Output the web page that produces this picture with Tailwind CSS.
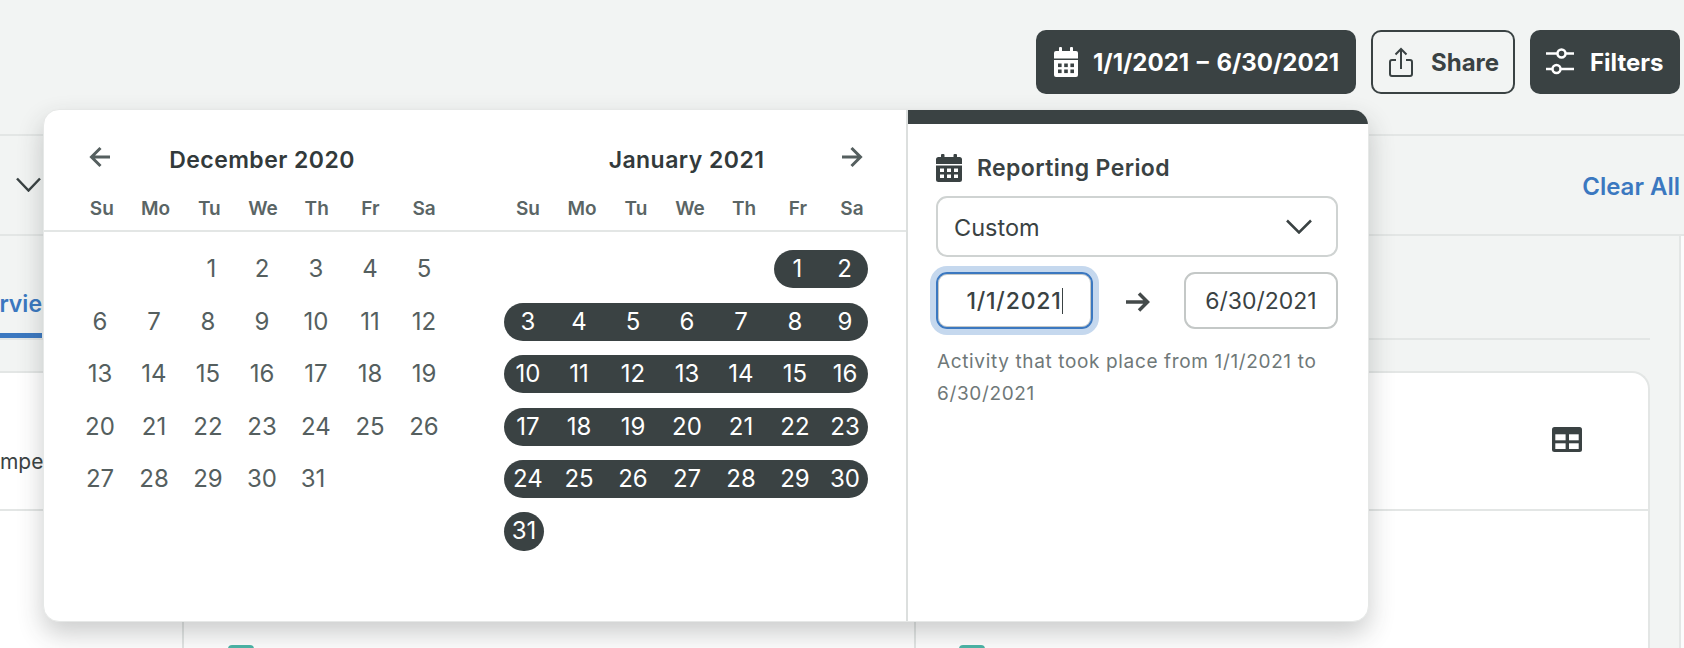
<!DOCTYPE html>
<html lang="en">
<head>
    <meta charset="UTF-8">
    <title>Reporting Period</title>
    <script src="https://cdn.jsdelivr.net/npm/@tailwindcss/browser@4"></script>
</head>
<body class="relative h-[648px] overflow-hidden bg-[#f2f4f3] font-['Inter',sans-serif] text-[#3a4243]">

    <!-- page header -->
    <header class="flex h-[136px] items-start justify-end gap-[15px] border-b-2 border-[#e3e6e5] pt-[30px] pr-[4px]">
        <button class="flex h-[64px] w-[320px] items-center gap-[15px] rounded-[10px] bg-[#3a4243] pl-[18px] text-[24px] font-[650] text-white">
            <svg class="w-[24px] h-[30px]" viewBox="0 0 24 30">
                <rect x="5" y="0" width="3" height="7" rx="1" fill="#fff"/>
                <rect x="16" y="0" width="3" height="7" rx="1" fill="#fff"/>
                <path d="M2 4H22a2 2 0 0 1 2 2V11.500H0V6a2 2 0 0 1 2-2z" fill="#fff"/>
                <path d="M0 13H24V28a2 2 0 0 1-2 2H2a2 2 0 0 1-2-2z" fill="#fff"/>
                <g fill="#3a4243">
                    <rect x="4" y="16.500" width="3.600" height="3.600"/><rect x="10.200" y="16.500" width="3.600" height="3.600"/><rect x="16.400" y="16.500" width="3.600" height="3.600"/>
                    <rect x="4" y="22.500" width="3.600" height="3.600"/><rect x="10.200" y="22.500" width="3.600" height="3.600"/><rect x="16.400" y="22.500" width="3.600" height="3.600"/>
                </g>
            </svg>
            <span class="pt-[1px] [word-spacing:2px]">1/1/2021 – 6/30/2021</span>
        </button>
        <button class="flex h-[64px] w-[144px] items-center gap-[18px] rounded-[10px] border-2 border-[#3a4243] pl-[16px] text-[24px] font-[650]">
            <svg class="w-[24px] h-[30px]" viewBox="0 0 24 30" fill="none" stroke="#3a4243" stroke-width="2">
                <path d="M7 13H3a2 2 0 0 0-2 2V27a2 2 0 0 0 2 2H21a2 2 0 0 0 2-2V15a2 2 0 0 0-2-2H17"/>
                <path d="M12 2V22M6.500 7.500L12 2l5.500 5.500"/>
            </svg>
            <span class="pt-[1px]">Share</span>
        </button>
        <button class="flex h-[64px] w-[150px] items-center gap-[16px] rounded-[10px] bg-[#3a4243] pl-[16px] text-[24px] font-[650] text-white">
            <svg class="w-[28px] h-[30px]" viewBox="0 0 28 30" fill="none" stroke="#fff" stroke-width="2.500">
                <path d="M0 6.500H11.500M19.500 6.500H28"/>
                <circle cx="15.500" cy="6.500" r="4"/>
                <path d="M0 22H6.500M14.500 22H28"/>
                <circle cx="10.500" cy="22" r="4"/>
            </svg>
            <span class="pt-[1px]">Filters</span>
        </button>
    </header>

    <!-- filter row -->
    <div class="flex h-[100px] items-center justify-between border-b-2 border-[#e3e6e5] pr-[4px] pl-[16px]">
        <svg class="w-[25px] h-[15px] -mt-[2px]" viewBox="0 0 25 15" fill="none" stroke="#3a4243" stroke-width="2.500"><path d="M1 1.500L12.500 13.500L24 1.500"/></svg>
        <a class="pt-[3px] text-[24px] font-semibold text-[#3b78c0]">Clear All</a>
    </div>

    <div class="flex">
        <div class="min-w-0 flex-1">
            <!-- tabs -->
            <div class="flex h-[104px] items-end border-b-2 border-[#e3e6e5] mr-[29px]">
                <div class="-ml-[60px] h-[104px] w-[102px] overflow-hidden whitespace-nowrap border-b-[5px] border-[#3b78c0] pt-[53px] text-right text-[23px] font-semibold text-[#3b78c0]">Overvie</div>
            </div>

            <!-- report card behind the popup -->
            <section class="mt-[31px] mr-[29px] -ml-[20px] rounded-tr-[18px] border-2 border-b-0 border-[#e3e6e5] bg-white">
                <div class="flex h-[138px] items-center justify-between border-b-2 border-[#e3e6e5] pr-[66px] pl-[20px]">
                    <span class="-ml-[30px] mt-[42px] whitespace-nowrap text-[21px]">Competitors</span>
                    <svg class="w-[30px] h-[25px] -mt-[3px]" viewBox="0 0 30 25">
                        <rect width="30" height="25" rx="2.500" fill="#3a4243"/>
                        <g fill="#fff">
                            <rect x="3.300" y="7.300" width="10.300" height="6"/><rect x="17" y="7.300" width="9.700" height="6"/>
                            <rect x="3.300" y="16.300" width="10.300" height="5.700"/><rect x="17" y="16.300" width="9.700" height="5.700"/>
                        </g>
                    </svg>
                </div>
                <div class="flex h-[137px]">
                    <div class="w-[202px] border-r-2 border-[#e3e6e5]"></div>
                    <div class="w-[732px] border-r-2 border-[#e3e6e5] pt-[134px] pl-[44px]"><div class="h-[4px] w-[26px] rounded-t-[5px] bg-[#4db6a8]"></div></div>
                    <div class="pt-[134px] pl-[43px]"><div class="h-[4px] w-[26px] rounded-t-[5px] bg-[#4db6a8]"></div></div>
                </div>
            </section>
        </div>
        <!-- sidebar edge -->
        <div class="h-[412px] w-[5px] shrink-0 border-l-2 border-[#e3e6e5] bg-[#fcfcfc]"></div>
    </div>

    <!-- date range popup -->
    <div class="absolute top-[109px] left-[43px] flex h-[513px] w-[1326px] overflow-hidden rounded-[16px] border border-[#e6e8e7] bg-white shadow-[0_12px_26px_rgba(40,48,48,0.24)]">
        <div class="w-[862px] shrink-0">
            <div class="flex h-[122px] border-b-2 border-[#e3e6e5] pt-[30px] pl-[29px]">
                <div class="w-[378px]">
                    <div class="grid grid-cols-[54px_1fr_54px] items-center h-[40px]">
                        <svg class="mx-auto w-[22px] h-[22px] -translate-y-[3px]" viewBox="0 0 22 22" fill="none" stroke="#555f5f" stroke-width="3"><path d="M21 11H3M11.500 2L2.500 11L11.500 20"/></svg>
                        <h3 class="text-center text-[23px] font-semibold tracking-[0.45px] text-[#323a3b]">December 2020</h3>
                    </div>
                    <div class="mt-[15px] grid grid-cols-7 pl-[2px] text-center text-[19px] font-semibold text-[#5a6565]">
                        <span>Su</span><span>Mo</span><span>Tu</span><span>We</span><span>Th</span><span>Fr</span><span>Sa</span>
                    </div>
                </div>
                <div class="ml-[50px] w-[378px]">
                    <div class="grid grid-cols-[54px_1fr_54px] items-center h-[40px]">
                        <span></span>
                        <h3 class="pr-[7px] text-center text-[23px] font-semibold tracking-[0.45px] text-[#323a3b]">January 2021</h3>
                        <svg class="mx-auto w-[22px] h-[22px] -translate-y-[3px]" viewBox="0 0 22 22" fill="none" stroke="#555f5f" stroke-width="3"><path d="M1 11H19M10.500 2L19.500 11L10.500 20"/></svg>
                    </div>
                    <div class="mt-[15px] grid grid-cols-7 text-center text-[19px] font-semibold text-[#5a6565]">
                        <span>Su</span><span>Mo</span><span>Tu</span><span>We</span><span>Th</span><span>Fr</span><span>Sa</span>
                    </div>
                </div>
            </div>

            <div class="flex pt-[18px] pl-[29px] text-[24px]">
                <!-- December -->
                <div class="grid h-fit w-[378px] grid-cols-7 grid-rows-[38px_38px_38px_38px_38px] items-center gap-y-[14.500px] text-center text-[#555f5f]">
                    <span class="col-start-3 pl-[7px]">1</span><span>2</span><span>3</span><span>4</span><span>5</span>
                    <span>6</span><span>7</span><span>8</span><span>9</span><span>10</span><span>11</span><span>12</span>
                    <span>13</span><span>14</span><span>15</span><span>16</span><span>17</span><span>18</span><span>19</span>
                    <span>20</span><span>21</span><span>22</span><span>23</span><span>24</span><span>25</span><span>26</span>
                    <span>27</span><span>28</span><span>29</span><span>30</span><span class="pr-[6px]">31</span>
                </div>
                <!-- January, selected range -->
                <div class="ml-[53px] flex w-[364px] flex-col items-end gap-y-[14.500px] text-center text-white">
                    <div class="flex h-[38px] items-center rounded-full bg-[#3a4243]"><span class="w-[47px]">1</span><span class="w-[47px]">2</span></div>
                    <div class="flex h-[38px] w-full items-center rounded-full bg-[#3a4243]"><span class="w-[48px]">3</span><span class="w-[54px]">4</span><span class="w-[54px]">5</span><span class="w-[54px]">6</span><span class="w-[54px]">7</span><span class="w-[54px]">8</span><span class="w-[46px]">9</span></div>
                    <div class="flex h-[38px] w-full items-center rounded-full bg-[#3a4243]"><span class="w-[48px]">10</span><span class="w-[54px]">11</span><span class="w-[54px]">12</span><span class="w-[54px]">13</span><span class="w-[54px]">14</span><span class="w-[54px]">15</span><span class="w-[46px]">16</span></div>
                    <div class="flex h-[38px] w-full items-center rounded-full bg-[#3a4243]"><span class="w-[48px]">17</span><span class="w-[54px]">18</span><span class="w-[54px]">19</span><span class="w-[54px]">20</span><span class="w-[54px]">21</span><span class="w-[54px]">22</span><span class="w-[46px]">23</span></div>
                    <div class="flex h-[38px] w-full items-center rounded-full bg-[#3a4243]"><span class="w-[48px]">24</span><span class="w-[54px]">25</span><span class="w-[54px]">26</span><span class="w-[54px]">27</span><span class="w-[54px]">28</span><span class="w-[54px]">29</span><span class="w-[46px]">30</span></div>
                    <div class="mr-auto -mt-[1px] flex h-[39px] w-[40px] items-center justify-center rounded-full bg-[#3a4243]">31</div>
                </div>
            </div>
        </div>

        <!-- reporting period panel -->
        <div class="flex-1 border-l-2 border-[#dcdfde]">
            <div class="h-[14px] bg-[#3a4243]"></div>
            <div class="pt-[27px] pr-[30px] pl-[28px]">
                <div class="flex items-center gap-[15px]">
                    <svg class="w-[26px] h-[28px]" viewBox="0 0 26 28">
                        <rect x="5" y="0" width="3.500" height="6" rx="1" fill="#3a4243"/>
                        <rect x="17.500" y="0" width="3.500" height="6" rx="1" fill="#3a4243"/>
                        <path d="M2.500 3H23.500a2.500 2.500 0 0 1 2.500 2.500V10H0V5.500A2.500 2.500 0 0 1 2.500 3z" fill="#3a4243"/>
                        <path d="M0 11.500H26V25.500a2.500 2.500 0 0 1-2.500 2.500H2.500A2.500 2.500 0 0 1 0 25.500z" fill="#3a4243"/>
                        <g fill="#fff">
                            <rect x="4" y="14.500" width="4" height="3.500"/><rect x="11" y="14.500" width="4" height="3.500"/><rect x="18" y="14.500" width="4" height="3.500"/>
                            <rect x="4" y="20.500" width="4" height="3.500"/><rect x="11" y="20.500" width="4" height="3.500"/><rect x="18" y="20.500" width="4" height="3.500"/>
                        </g>
                    </svg>
                    <span class="text-[23px] font-semibold tracking-[0.4px]">Reporting Period</span>
                </div>
                <div class="mt-[10px] flex h-[61px] items-center justify-between rounded-[11px] border-2 border-[#cfd3d2] pr-[24px] pl-[16px] text-[23.500px]">
                    <span class="pt-[3px]">Custom</span>
                    <svg class="w-[26px] h-[15px]" viewBox="0 0 26 15" fill="none" stroke="#3a4243" stroke-width="2.500"><path d="M1 1.500L13 13.500L25 1.500"/></svg>
                </div>
                <div class="mt-[15px] flex items-center justify-between text-[23px]">
                    <div class="flex h-[57px] w-[157px] items-center justify-center rounded-[11px] border-2 border-[#3b78c0] pt-[2px] font-medium tracking-[0.8px] shadow-[0_0_0_6px_#c5d8ee,inset_0_0_0_1px_#c4c8c7]">1/1/2021<span class="h-[26px] w-px bg-[#3a4243]"></span></div>
                    <svg class="-ml-[2px] w-[24px] h-[20px] translate-y-[2px]" viewBox="0 0 24 20" fill="none" stroke="#444a4a" stroke-width="3.500"><path d="M0 10H21M13 1.500L21.500 10L13 18.500"/></svg>
                    <div class="flex h-[57px] w-[154px] items-center justify-center rounded-[11px] border-2 border-[#c4c8c7] pt-[2px]">6/30/2021</div>
                </div>
                <p class="mt-[17px] pl-[1px] text-[19px] leading-[32px] tracking-[0.64px] text-[#6f7878]">Activity that took place from 1/1/2021 to 6/30/2021</p>
            </div>
        </div>
    </div>
</body>
</html>
